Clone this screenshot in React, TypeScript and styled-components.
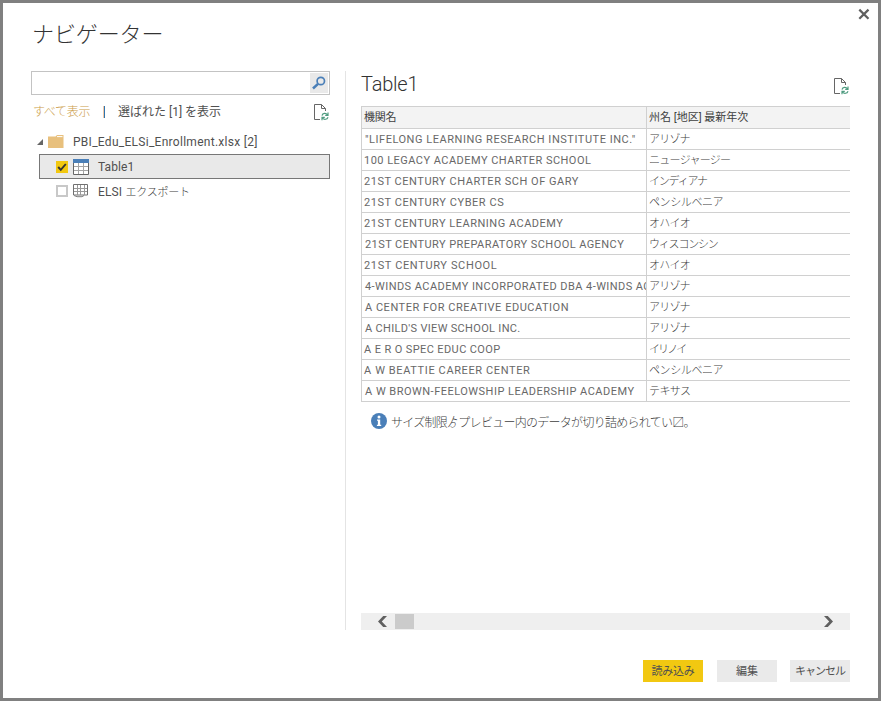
import React from 'react';
import styled, { createGlobalStyle } from 'styled-components';

const GlobalStyle = createGlobalStyle`
  * { box-sizing: border-box; }
  body {
    margin: 0;
    background: #fff;
    color: #505050;
    font-family: Roboto, "Noto Sans CJK JP", sans-serif;
  }
  svg { display: block; flex: none; }
`;

const Dialog = styled.div`
  display: flex;
  flex-direction: column;
  width: 881px;
  height: 701px;
  border: 3px solid #808080;
  background: #fff;
`;

const TitleBar = styled.header`
  display: flex;
  justify-content: space-between;
  align-items: flex-start;
  height: 68px;
  padding: 5px 8px 0 29px;
`;

const Title = styled.h1`
  margin: 8px 0 0;
  font: 300 22px/32px "Noto Sans CJK JP", sans-serif;
  letter-spacing: -0.1px;
  color: #333;
`;

const IconButton = styled.button`
  display: flex;
  padding: 0;
  border: 0;
  background: none;
`;

const Body = styled.div`
  display: flex;
  height: 559px;
  padding-left: 28px;
`;

const Sidebar = styled.aside`
  display: flex;
  flex-direction: column;
  width: 315px;
  padding-right: 15px;
  border-right: 1px solid #e4e4e4;
`;

const SearchBox = styled.div`
  display: flex;
  justify-content: flex-end;
  align-items: center;
  width: 299px;
  height: 24px;
  padding-right: 1px;
  border: 1px solid #c3c3c3;
`;

const SearchButton = styled(IconButton)`
  width: 18px;
  height: 20px;
  background: #e9e9e9;
`;

const FilterBar = styled.div`
  display: flex;
  align-items: center;
  height: 34px;
  padding: 0 1px;
  font-size: 12px;
  white-space: nowrap;
`;

const ShowAll = styled.span`
  width: 71px;
  padding: 0 0 3px 1px;
  color: #cc9c48;
  font-weight: 300;
  letter-spacing: -0.3px;
`;

const Separator = styled.span`
  width: 2px;
  height: 12px;
  margin-right: 13px;
  border-left: 1px solid #f0c8a8;
  border-right: 1px solid #2e75b0;
`;

const ShowSelected = styled.span`
  flex: 1;
  padding-bottom: 3px;
`;

const TreeRow = styled.div<{ $selected?: boolean; $root?: boolean }>`
  display: flex;
  align-items: center;
  height: ${p => (p.$selected || p.$root ? 25 : 24)}px;
  margin-left: ${p => (p.$root ? 5 : 8)}px;
  width: ${p => (p.$root ? 290 : 291)}px;
  padding-left: ${p => (p.$root ? 0 : 16)}px;
  border: 1px solid ${p => (p.$selected ? '#777' : 'transparent')};
  background: ${p => (p.$selected ? '#e9e9e9' : 'transparent')};
`;

const TreeLabel = styled.span<{ $gap: number; $spacing?: number }>`
  margin-left: ${p => p.$gap}px;
  font-size: 12px;
  letter-spacing: ${p => p.$spacing ?? 0}px;
  white-space: nowrap;
`;

const Kana = styled.span`
  color: #404040;
  font-size: 11px;
  font-weight: 300;
  letter-spacing: -0.2px;
`;

const Checkbox = styled.span<{ $checked?: boolean }>`
  display: block;
  width: 12px;
  height: 12px;
  margin-right: 5px;
  border: ${p => (p.$checked ? 0 : '2px solid #c8c8c8')};
  background: ${p => (p.$checked ? '#f2c811' : '#fff')};
`;

const Preview = styled.main`
  display: flex;
  flex-direction: column;
  width: 504px;
  padding-left: 15px;
`;

const PreviewHead = styled.div`
  display: flex;
  justify-content: space-between;
  height: 35px;
  padding: 7px 1px 0 0;
`;

const PreviewTitle = styled.h2`
  margin: -7px 0 0;
  font: 300 20px/26px Roboto, sans-serif;
  letter-spacing: -0.2px;
  color: #333;
`;

const Table = styled.div`
  border-top: 1px solid #d0d0d0;
  border-left: 1px solid #d0d0d0;
`;

const TableRow = styled.div<{ $head?: boolean }>`
  display: grid;
  grid-template-columns: 285px 203px;
  height: ${p => (p.$head ? 22 : 21)}px;
  border-bottom: 1px solid #d0d0d0;
  background: ${p => (p.$head ? '#f3f3f3' : '#fff')};
`;

const Cell = styled.div<{ $spacing?: number; $pad?: number; $tone?: 'head' | 'kana' }>`
  overflow: hidden;
  padding-left: ${p => p.$pad ?? 2}px;
  border-right: 1px solid #d0d0d0;
  color: ${p => (p.$tone ? '#404040' : '#686868')};
  font-size: 11px;
  font-weight: ${p => (p.$tone === 'kana' ? 300 : 400)};
  line-height: 22px;
  letter-spacing: ${p => p.$spacing ?? 0}px;
  white-space: nowrap;
  &:last-child { border-right: 0; }
`;

const Notice = styled.div`
  display: flex;
  align-items: center;
  gap: 4px;
  height: 38px;
  padding-left: 10px;
  color: #404040;
  font: 300 12px/20px "Noto Sans CJK JP", sans-serif;
  letter-spacing: -0.72px;
  white-space: nowrap;
`;

const NoticeText = styled.span`
  padding-top: 1px;
`;

const Scrollbar = styled.div`
  display: flex;
  align-items: center;
  height: 17px;
  margin-top: auto;
  padding: 0 16px;
  background: #efefef;
`;

const Thumb = styled.div`
  width: 19px;
  height: 15px;
  margin: 0 auto 0 7px;
  background: #cbcbcb;
`;

const Footer = styled.footer`
  display: flex;
  justify-content: flex-end;
  padding: 30px 28px 0 0;
`;

const Button = styled.button<{ $primary?: boolean; $gap?: number; $spacing?: number }>`
  width: 60px;
  height: 22px;
  margin-left: ${p => p.$gap ?? 0}px;
  padding: 0 0 1px;
  border: 0;
  background: ${p => (p.$primary ? '#f2c811' : '#eaeaea')};
  color: #505050;
  font: 400 11px/21px "Noto Sans CJK JP", sans-serif;
  letter-spacing: ${p => p.$spacing ?? 0}px;
  white-space: nowrap;
`;

const RefreshDocIcon = () => (
  <svg width="15" height="17" viewBox="0 0 15 17" fill="none">
    <path d="M6 15.5H.5V.5h7l4 4V7M7.5.5v4h4" stroke="#666" />
    <path d="M8 11.6C8.600 9 12 8.600 13.400 10.800M14 8.600v2.700h-2.800M14 13.200c-.8 2.400-4 2.800-5.400.8M8 16.200v-2.800h2.800" stroke="#4f9c80" strokeWidth="1.2" />
  </svg>
);

const CloseIcon = () => (
  <svg width="12" height="12" viewBox="0 0 12 12" stroke="#606060" strokeWidth="2.2">
    <path d="M1.3 1.6l9.2 9.2M10.5 1.6l-9.2 9.2" />
  </svg>
);

const SearchIcon = () => (
  <svg width="18" height="20" viewBox="0 0 18 20" fill="none" stroke="#4a7fb8">
    <circle cx="10.8" cy="8" r="3.7" strokeWidth="1.7" />
    <path d="M8 10.8L3 15.5" strokeWidth="2.5" />
  </svg>
);

const FolderIcon = () => (
  <svg width="16" height="14" viewBox="0 0 16 14">
    <path d="M0 1.5h7.5L9 0h6.5v13H0z" fill="#e8c07d" />
    <path d="M9 1.6h5.5" stroke="#fff" strokeWidth="1" />
  </svg>
);

const CaretIcon = () => (
  <svg width="6" height="6" viewBox="0 0 6 6"><path d="M6 0v6H0z" fill="#666" /></svg>
);

const CheckIcon = () => (
  <svg width="12" height="12" viewBox="0 0 12 12" fill="none">
    <path d="M2.2 6l2.6 2.8L9.8 3" stroke="#333" strokeWidth="1.9" />
  </svg>
);

const TableIcon = () => (
  <svg width="16" height="16" viewBox="0 0 16 16" fill="none">
    <path d="M.5.5h15v15H.5z" fill="#fff" stroke="#666" />
    <path d="M0 0h16v4H0z" fill="#4a7fb8" />
    <path d="M5.5 4v11M10.5 4v11M1 7.5h14M1 11.5h14" stroke="#a5a5a5" />
  </svg>
);

const SheetIcon = () => (
  <svg width="16" height="14" viewBox="0 0 16 14" fill="none">
    <path d="M.5.5h14v10.500H.5z" stroke="#707070" />
    <path d="M4.500 1v10M7.500 1v10M11.500 1v10M1 4.500h13M1 7.500h13" stroke="#999" />
    <path d="M1 11.500l3 1.200h5l2-1.200" stroke="#808080" />
  </svg>
);

const InfoIcon = () => (
  <svg width="16" height="16" viewBox="0 0 16 16">
    <circle cx="8" cy="8" r="8" fill="#4a7fb8" />
    <circle cx="8" cy="4" r="1.5" fill="#fff" />
    <path d="M6 6.5h3.200v5.200h1v1.300H5.900v-1.300h1V7.800H6z" fill="#fff" />
  </svg>
);

const Chevron = ({ right }: { right?: boolean }) => (
  <svg width="11" height="12" viewBox="0 0 11 12">
    <path
      d={right ? 'M1 0h3.800L10 5.500 4.800 11H1l5.200-5.500z' : 'M10 0H6.200L1 5.500 6.200 11H10L4.800 5.500z'}
      fill="#606060"
    />
  </svg>
);

type Row = { name: string; ns: number; pad?: number; state: string; ss: number };

const rows: Row[] = [
  { name: '"LIFELONG LEARNING RESEARCH INSTITUTE INC."', ns: 0.53, pad: 3, state: 'アリゾナ', ss: -0.8 },
  { name: '100 LEGACY ACADEMY CHARTER SCHOOL', ns: 0.47, state: 'ニュージャージー', ss: -0.7 },
  { name: '21ST CENTURY CHARTER SCH OF GARY', ns: 0.53, state: 'インディアナ', ss: -1.2 },
  { name: '21ST CENTURY CYBER CS', ns: 0.55, state: 'ペンシルベニア', ss: -0.4 },
  { name: '21ST CENTURY LEARNING ACADEMY', ns: 0.51, state: 'オハイオ', ss: -0.7 },
  { name: '21ST CENTURY PREPARATORY SCHOOL AGENCY', ns: 0.43, pad: 3, state: 'ウィスコンシン', ss: -1.2 },
  { name: '21ST CENTURY SCHOOL', ns: 0.64, state: 'オハイオ', ss: -0.7 },
  { name: '4-WINDS ACADEMY INCORPORATED DBA 4-WINDS AC', ns: 0.43, pad: 3, state: 'アリゾナ', ss: -0.8 },
  { name: 'A CENTER FOR CREATIVE EDUCATION', ns: 0.52, pad: 3, state: 'アリゾナ', ss: -0.8 },
  { name: "A CHILD'S VIEW SCHOOL INC.", ns: 0.32, pad: 3, state: 'アリゾナ', ss: -0.8 },
  { name: 'A E R O SPEC EDUC COOP', ns: 0.39, state: 'イリノイ', ss: -1.9 },
  { name: 'A W BEATTIE CAREER CENTER', ns: 0.62, state: 'ペンシルベニア', ss: -0.4 },
  { name: 'A W BROWN-FEELOWSHIP LEADERSHIP ACADEMY', ns: 0.49, pad: 3, state: 'テキサス', ss: -0.6 },
];

export default function App() {
  return (
    <>
      <GlobalStyle />
      <Dialog>
        <TitleBar>
          <Title>ナビゲーター</Title>
          <IconButton aria-label="閉じる"><CloseIcon /></IconButton>
        </TitleBar>
        <Body>
          <Sidebar>
            <SearchBox>
              <SearchButton aria-label="検索"><SearchIcon /></SearchButton>
            </SearchBox>
            <FilterBar>
              <ShowAll>すべて表示</ShowAll>
              <Separator />
              <ShowSelected>選ばれた [1] を表示</ShowSelected>
              <RefreshDocIcon />
            </FilterBar>
            <TreeRow $root>
              <CaretIcon />
              <TreeLabel $gap={5}><FolderIcon /></TreeLabel>
              <TreeLabel $gap={9} $spacing={0.28}>PBI_Edu_ELSi_Enrollment.xlsx [2]</TreeLabel>
            </TreeRow>
            <TreeRow $selected>
              <Checkbox $checked><CheckIcon /></Checkbox>
              <TableIcon />
              <TreeLabel $gap={9} $spacing={0.1}>Table1</TreeLabel>
            </TreeRow>
            <TreeRow>
              <Checkbox />
              <SheetIcon />
              <TreeLabel $gap={9} $spacing={0.15}>ELSI <Kana>エクスポート</Kana></TreeLabel>
            </TreeRow>
          </Sidebar>
          <Preview>
            <PreviewHead>
              <PreviewTitle>Table1</PreviewTitle>
              <RefreshDocIcon />
            </PreviewHead>
            <Table>
              <TableRow $head>
                <Cell $tone="head" $spacing={-0.2}>機関名</Cell>
                <Cell $tone="head">州名 [地区] 最新年次</Cell>
              </TableRow>
              {rows.map(r => (
                <TableRow key={r.name}>
                  <Cell $spacing={r.ns} $pad={r.pad}>{r.name}</Cell>
                  <Cell $tone="kana" $spacing={r.ss}>{r.state}</Cell>
                </TableRow>
              ))}
            </Table>
            <Notice>
              <InfoIcon />
              <NoticeText>サイズ制限ゟプレビュー内のデータが切り詰められてい〼。</NoticeText>
            </Notice>
            <Scrollbar>
              <Chevron />
              <Thumb />
              <Chevron right />
            </Scrollbar>
          </Preview>
        </Body>
        <Footer>
          <Button $primary $spacing={-0.3}>読み込み</Button>
          <Button $gap={14}>編集</Button>
          <Button $gap={13} $spacing={-1}>キャンセル</Button>
        </Footer>
      </Dialog>
    </>
  );
}
